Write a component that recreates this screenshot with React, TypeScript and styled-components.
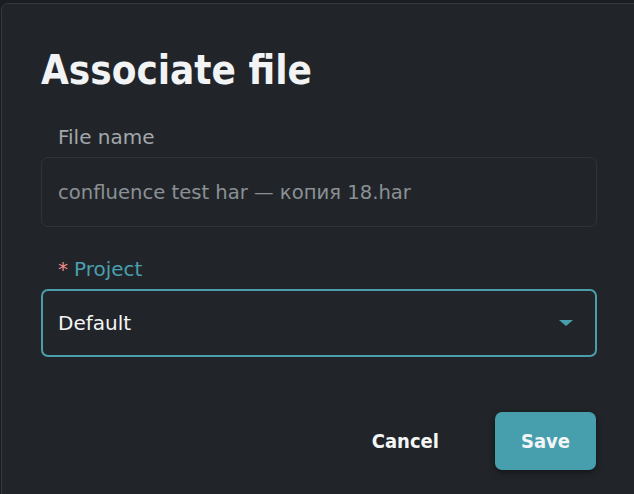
import React from 'react'
import styled, { createGlobalStyle } from 'styled-components'

const GlobalStyle = createGlobalStyle`
  html, body {
    margin: 0;
    padding: 0;
    background: #1b1e21;
    overflow: hidden;
  }
  body {
    font-family: "DejaVu Sans", sans-serif;
  }
`

const Page = styled.div`
  width: 634px;
  height: 494px;
  padding: 3px 0 0 1px;
  box-sizing: border-box;
  overflow: hidden;
`

const Dialog = styled.div`
  width: 660px;
  height: 520px;
  background: #212529;
  border: 1px solid #343a40;
  border-radius: 7px;
  box-sizing: border-box;
  padding: 40px 0 0 39px;
`

const Title = styled.h1`
  margin: 0;
  color: #f1f3f5;
  font-family: "DejaVu Sans Condensed", "DejaVu Sans", sans-serif;
  font-size: 40px;
  font-weight: 700;
  line-height: 52px;
`

const Field = styled.div<{ gap: number }>`
  width: 556px;
  margin-top: ${(p) => p.gap}px;
  display: flex;
  flex-direction: column;
`

const Label = styled.label<{ active?: boolean }>`
  padding-left: 17px;
  font-size: 20px;
  line-height: 24px;
  color: ${(p) => (p.active ? '#4a9fae' : '#a3a7ab')};
  margin-bottom: 8px;
`

const Star = styled.span`
  color: #f08c8c;
  margin-right: 6px;
`

const InputBox = styled.div`
  height: 70px;
  width: 556px;
  box-sizing: border-box;
  border: 1px solid #2f3439;
  border-radius: 7px;
  display: flex;
  align-items: center;
  padding: 0 16px;
  color: #8b9095;
  font-size: 19.6px;
`

const Select = styled.div`
  height: 68px;
  width: 556px;
  box-sizing: border-box;
  border: 2px solid #4a9eab;
  border-radius: 7px;
  display: flex;
  align-items: center;
  justify-content: space-between;
  padding: 0 22px 0 15px;
  color: #f4f5f6;
  font-size: 20px;
`

const Caret = styled.span`
  width: 0;
  height: 0;
  border-left: 7px solid transparent;
  border-right: 7px solid transparent;
  border-top: 6px solid #4a9fae;
`

const Actions = styled.div`
  width: 555px;
  margin-top: 55px;
  display: flex;
  justify-content: flex-end;
  align-items: center;
  gap: 36px;
`

const Button = styled.button<{ primary?: boolean }>`
  font-family: "DejaVu Sans Condensed", "DejaVu Sans", sans-serif;
  font-size: 20px;
  font-weight: 700;
  color: #f4f5f6;
  border: none;
  border-radius: 7px;
  height: 58px;
  padding: 0 ${(p) => (p.primary ? 26 : 20)}px;
  background: ${(p) => (p.primary ? '#479fae' : 'transparent')};
  box-shadow: ${(p) => (p.primary ? '0 2px 6px rgba(0,0,0,0.45)' : 'none')};
  cursor: pointer;
`

export default function App() {
  return (
    <>
      <GlobalStyle />
      <Page>
        <Dialog>
          <Title>Associate file</Title>
          <Field gap={29}>
            <Label>File name</Label>
            <InputBox>confluence test har — копия 18.har</InputBox>
          </Field>
          <Field gap={30}>
            <Label active>
              <Star>*</Star>Project
            </Label>
            <Select>
              Default
              <Caret />
            </Select>
          </Field>
          <Actions>
            <Button>Cancel</Button>
            <Button primary>Save</Button>
          </Actions>
        </Dialog>
      </Page>
    </>
  )
}
